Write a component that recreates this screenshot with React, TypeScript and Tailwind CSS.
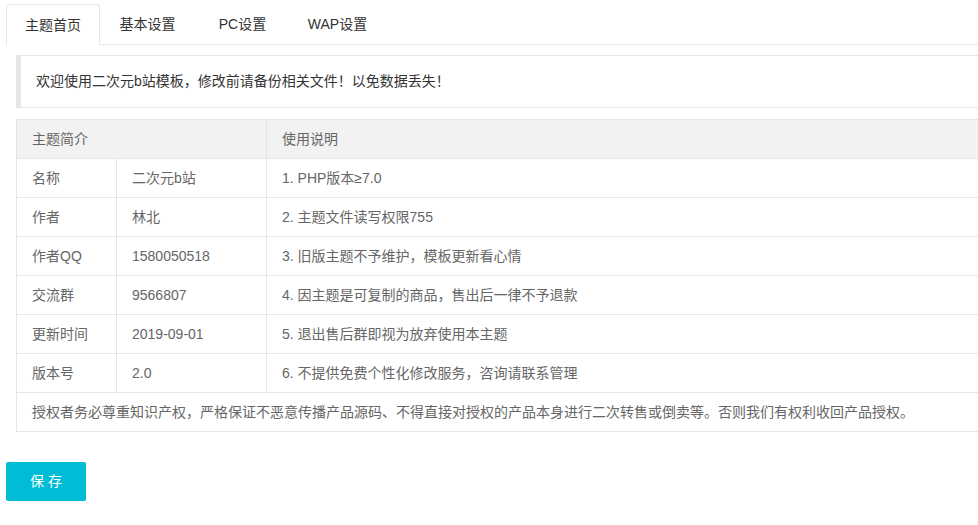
const tabs = ['主题首页', '基本设置', 'PC设置', 'WAP设置'];

const rows: [string, string, string][] = [
  ['名称', '二次元b站', '1. PHP版本≥7.0'],
  ['作者', '林北', '2. 主题文件读写权限755'],
  ['作者QQ', '1580050518', '3. 旧版主题不予维护，模板更新看心情'],
  ['交流群', '9566807', '4. 因主题是可复制的商品，售出后一律不予退款'],
  ['更新时间', '2019-09-01', '5. 退出售后群即视为放弃使用本主题'],
  ['版本号', '2.0', '6. 不提供免费个性化修改服务，咨询请联系管理'],
];

export default function App() {
  return (
    <div
      className="w-[978px] h-[525px] overflow-hidden bg-white text-[14px] text-[#333]"
      style={{ fontFamily: '"Liberation Sans", "Noto Sans CJK SC", sans-serif' }}
    >
      {/* tabs */}
      <div className="pt-[4px] pl-[6px]">
        <ul className="flex h-[41px] border-b border-[#e6e6e6] w-[1000px]">
          {tabs.map((t, i) => (
            <li
              key={t}
              className={
                i === 0
                  ? 'w-[94px] h-[41px] leading-[40px] text-center bg-white border border-b-0 border-[#e6e6e6] rounded-t-[2px]'
                  : 'w-[95px] h-[40px] leading-[40px] text-center'
              }
            >
              {t}
            </li>
          ))}
        </ul>
      </div>

      <div className="pl-[16px] pt-[10px]">
        {/* quote */}
        <div className="w-[1000px] h-[53px] border border-l-[5px] border-[#e6e6e6] px-[15px] leading-[51px]">
          欢迎使用二次元b站模板，修改前请备份相关文件！以免数据丢失！
        </div>

        {/* table */}
        <table className="mt-[11px] w-[1000px] border-collapse text-[#666]">
          <thead>
            <tr className="bg-[#f2f2f2]">
              <th colSpan={2} className="h-[39px] px-[15px] text-left font-normal border border-[#e6e6e6]">
                主题简介
              </th>
              <th className="h-[39px] px-[15px] text-left font-normal border border-[#e6e6e6]">使用说明</th>
            </tr>
          </thead>
          <tbody>
            {rows.map(([a, b, c]) => (
              <tr key={a}>
                <td className="w-[100px] h-[39px] px-[15px] border border-[#e6e6e6]">{a}</td>
                <td className="w-[150px] h-[39px] px-[15px] border border-[#e6e6e6]">{b}</td>
                <td className="h-[39px] px-[15px] border border-[#e6e6e6]">{c}</td>
              </tr>
            ))}
            <tr>
              <td colSpan={3} className="h-[39px] px-[15px] border border-[#e6e6e6]">
                授权者务必尊重知识产权，严格保证不恶意传播产品源码、不得直接对授权的产品本身进行二次转售或倒卖等。否则我们有权利收回产品授权。
              </td>
            </tr>
          </tbody>
        </table>
      </div>

      <div className="pl-[6px] pt-[30px]">
        <button className="w-[80px] h-[39px] rounded-[2px] bg-[#00bcd4] text-white tracking-[4px] pl-[4px]">
          保存
        </button>
      </div>
    </div>
  );
}
